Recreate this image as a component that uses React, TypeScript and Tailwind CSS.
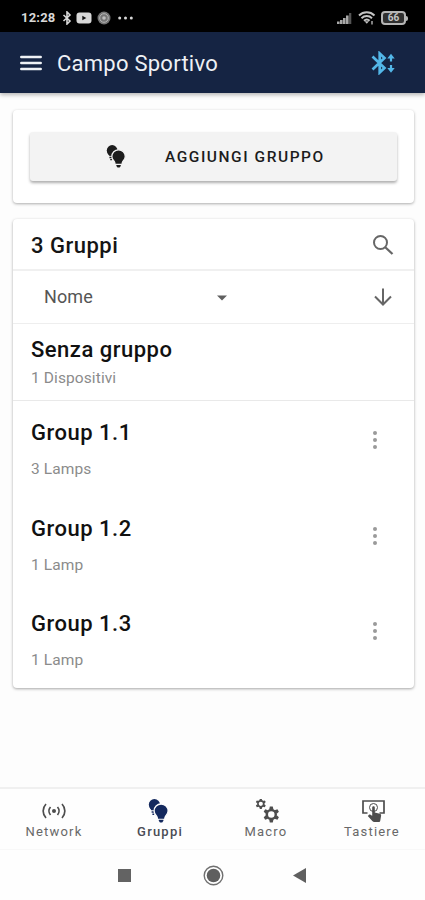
import type { ReactNode } from "react";

function BulbsIcon({ size, halo }: { size: number; halo: string }) {
  return (
    <svg width={size} height={size} viewBox="0 0 24 24" fill="currentColor">
      <circle cx="6.400" cy="5.700" r="5.600" />
      <path d="M1.600 8l1.700 3.200h4V8zM3.600 12.200h2.600v1.600H3.600zM4.400 14.600h1.800v1.400H4.400z" />
      <path
        d="M13.100 5c-4 0-7 3-7 6.900 0 2.400 1.400 3.800 2.500 5.200.6.900.8 1.700.9 3.200h7.200c.1-1.500.3-2.300.9-3.200 1.100-1.400 2.500-2.800 2.500-5.200 0-3.900-3-6.900-7-6.900z"
        stroke={halo}
        strokeWidth="1.300"
      />
      <path d="M10.800 20.800h4.600v1l-1.200 1.800h-2.200l-1.200-1.800z" />
    </svg>
  );
}

function StatusBar() {
  return (
    <div className="flex h-8 shrink-0 items-center bg-black pt-[4px] pr-[17px] pl-[21px] text-[#d8d8d8]">
      <span className="w-[37px] text-[13px] leading-4 font-bold tracking-[0.2px] whitespace-nowrap">12:28</span>
      <svg className="ml-[4px]" width="10" height="14" viewBox="0 0 10 14" fill="none" stroke="currentColor" strokeWidth="1.600">
        <path d="M1.500 4l6.500 6-3 3V1l3 3-6.500 6" />
      </svg>
      <svg className="ml-[4px]" width="16" height="12" viewBox="0 0 16 12">
        <rect x="0.500" y="0.500" width="15" height="11" rx="3" fill="currentColor" />
        <path d="M6.300 3.700l4 2.300-4 2.300z" fill="#111" />
      </svg>
      <svg className="ml-[5px]" width="14" height="14" viewBox="0 0 14 14" fill="none">
        <circle cx="7" cy="7" r="6.500" fill="#757575" />
        <circle cx="7" cy="7" r="4.300" stroke="#b5b5b5" />
        <circle cx="7" cy="7" r="1.800" fill="#bdbdbd" />
      </svg>
      <svg className="ml-[7px]" width="15" height="4" viewBox="0 0 15 4" fill="currentColor">
        <circle cx="1.700" cy="2" r="1.500" />
        <circle cx="7.500" cy="2" r="1.500" />
        <circle cx="13.300" cy="2" r="1.500" />
      </svg>
      <div className="flex-1" />
      <svg width="16" height="12" viewBox="0 0 16 12" fill="#a9a9a9">
        <path d="M0 9.500h2.600V12H0zM3 8h2.600v4H3zM6 6h2.600v6H6zM9 3.500h2.600V12H9z" />
        <path d="M12 1h2.300v11H12z" fill="#555" />
      </svg>
      <svg className="ml-[5px]" width="18" height="14" viewBox="0 0 18 14" fill="none" stroke="#c4c4c4" strokeWidth="2">
        <path d="M1 4.500C5.500.3 12 .3 16.500 4.500M3.500 7.200c3-2.800 7.500-2.800 10.500 0M6 9.800c1.600-1.500 4-1.500 5.600 0" />
        <path d="M6.500 10.200h4.500l-2.200 2.600z" fill="#c4c4c4" stroke="none" />
        <path d="M14 10v3.500" strokeWidth="1.300" />
      </svg>
      <div className="ml-[5px] flex items-center">
        <div className="flex h-[14px] w-[25px] items-center justify-center rounded-[4px] border-2 border-[#b5b5b5] bg-[#303030] text-[10px] leading-none font-bold text-[#c4c4c4]">
          66
        </div>
        <div className="h-[5px] w-[2px] rounded-r bg-[#b5b5b5]" />
      </div>
    </div>
  );
}

function AppBar() {
  return (
    <header className="z-10 flex h-[61px] shrink-0 items-center bg-[#152443] pr-[29px] pl-[20px] shadow-[0_2px_4px_rgba(0,0,0,0.28)]">
      <svg width="22" height="16" viewBox="0 0 22 16" fill="none" stroke="#eef1f5" strokeWidth="2.500" strokeLinecap="round">
        <path d="M1.300 2h19.400M1.300 8h19.400M1.300 14h19.400" />
      </svg>
      <h1 className="mt-[2px] ml-[15px] text-[22px] leading-7 tracking-[0.250px] whitespace-nowrap text-[#eef1f5]">Campo Sportivo</h1>
      <div className="flex-1" />
      <svg width="25" height="24" viewBox="0 0 25 24" fill="none" stroke="#53b7e8" strokeWidth="2.700">
        <path d="M1.500 5.500L13.500 17 8.700 21.500V2.500l4.800 4.500L1.500 18.500" />
        <path d="M20 6v4.500M20 14v4.500" strokeWidth="2.200" />
        <path d="M16.300 7.500L20 2.800l3.700 4.700zM16.300 17L20 21.700l3.700-4.700z" fill="#53b7e8" stroke="none" />
      </svg>
    </header>
  );
}

function GroupRow({ name, detail }: { name: string; detail: string }) {
  return (
    <li className="flex h-[95.500px] justify-between pt-[17px] pr-[35px] pl-[18px]">
      <div>
        <div className="text-[22px] leading-[30px] font-medium tracking-[0.5px] text-[#111]">{name}</div>
        <div className="mt-[11px] text-[15.500px] leading-[20px] tracking-[0.1px] text-[#8b8b8b]">{detail}</div>
      </div>
      <svg className="mt-[12px]" width="8" height="20" viewBox="0 0 8 20" fill="#9a9a9a">
        <circle cx="4" cy="3" r="2" />
        <circle cx="4" cy="10" r="2" />
        <circle cx="4" cy="17" r="2" />
      </svg>
    </li>
  );
}

function Tab({ label, active, children }: { label: string; active?: boolean; children: ReactNode }) {
  return (
    <div className={active ? "flex flex-1 flex-col items-center pt-[9px] text-[#14295e]" : "flex flex-1 flex-col items-center pt-[9px] text-[#4d4d4d]"}>
      <div className="flex h-[26px] items-center justify-center">{children}</div>
      <span className={active ? "text-[13px] leading-[16px] font-medium tracking-[1.200px] text-[#4a4c55]" : "text-[13px] leading-[16px] tracking-[1.200px] text-[#686868]"}>
        {label}
      </span>
    </div>
  );
}

const TEETH = [0, 60, 120, 180, 240, 300];

function Gear({ cx, cy, r }: { cx: number; cy: number; r: number }) {
  return (
    <g transform={`translate(${cx} ${cy}) scale(${r / 10})`}>
      <circle r="5.800" fill="none" stroke="currentColor" strokeWidth="3.200" />
      {TEETH.map((a) => (
        <path key={a} d="M-2.800-6.500L-1.900-10.300h3.800L2.800-6.500z" fill="currentColor" transform={`rotate(${a})`} />
      ))}
    </g>
  );
}

const GROUPS = [
  { name: "Group 1.1", detail: "3 Lamps" },
  { name: "Group 1.2", detail: "1 Lamp" },
  { name: "Group 1.3", detail: "1 Lamp" },
];

export default function App() {
  return (
    <div className="flex h-[900px] w-[425px] flex-col overflow-hidden bg-[#fdfdfd] font-['Roboto',sans-serif]">
      <StatusBar />
      <AppBar />

      <main className="flex-1 pt-[17px] pr-[11px] pl-[13px]">
        <section className="h-[93px] rounded-[4px] bg-white px-[17px] pt-[22px] shadow-[0_1px_3px_rgba(0,0,0,0.32)]">
          <button className="flex h-[49px] w-[367px] items-center rounded-[3px] bg-[#f3f3f3] pl-[76px] text-[#1c1c1c] shadow-[0_2px_3px_rgba(0,0,0,0.32)]">
            <BulbsIcon size={23} halo="#f3f3f3" />
            <span className="ml-[36px] text-[15.500px] leading-6 font-medium tracking-[1.550px] whitespace-nowrap">AGGIUNGI GRUPPO</span>
          </button>
        </section>

        <section className="mt-[16px] h-[469px] rounded-[4px] bg-white shadow-[0_1px_3px_rgba(0,0,0,0.35)]">
          <div className="flex h-[52px] items-center justify-between border-b-2 border-[#f0f0f0] pr-[20px] pl-[18px]">
            <h2 className="mt-[3px] text-[22px] leading-7 font-medium tracking-[0.5px] text-[#151515]">3 Gruppi</h2>
            <svg className="mt-[2px]" width="22" height="22" viewBox="0 0 22 22" fill="none" stroke="#666" strokeWidth="2">
              <circle cx="8.500" cy="8.500" r="6.500" />
              <path d="M13 13l7.500 7" strokeWidth="2.300" />
            </svg>
          </div>
          <div className="flex h-[53px] items-center border-b border-[#eeeeee] pr-[22px] pl-[31px]">
            <span className="w-[173px] text-[18px] leading-6 tracking-[0.1px] text-[#555]">Nome</span>
            <svg className="mt-[2px]" width="10" height="6" viewBox="0 0 10 6" fill="#606060">
              <path d="M0 .5h10L5 5.500z" />
            </svg>
            <div className="flex-1" />
            <svg width="18" height="18" viewBox="0 0 18 18" fill="none" stroke="#666" strokeWidth="2">
              <path d="M9 .5v16M1 8.500l8 8 8-8" />
            </svg>
          </div>
          <div className="h-[77px] border-b border-[#e9e9e9] pt-[11px] pl-[18px]">
            <div className="text-[22px] leading-[30px] font-medium tracking-[0.5px] text-[#111]">Senza gruppo</div>
            <div className="mt-[3px] text-[15.500px] leading-[20px] tracking-[0.1px] text-[#8b8b8b]">1 Dispositivi</div>
          </div>
          <ul>
            {GROUPS.map((g) => (
              <GroupRow key={g.name} name={g.name} detail={g.detail} />
            ))}
          </ul>
        </section>
      </main>

      <nav className="flex h-[63px] shrink-0 border-t-2 border-b border-t-[#f0f0f0] border-b-[#f8f8f8] bg-[#fefefe] pl-px">
        <Tab label="Network">
          <svg width="24" height="18" viewBox="0 0 24 18" fill="none" stroke="currentColor" strokeWidth="1.700">
            <circle cx="12" cy="9" r="2" fill="currentColor" stroke="none" />
            <path d="M8.500 5c-2 2.300-2 5.700 0 8M15.500 5c2 2.300 2 5.700 0 8M4 2C.2 6 .2 12 4 16M20 2c3.800 4 3.800 10 0 14" />
          </svg>
        </Tab>
        <Tab label="Gruppi" active>
          <BulbsIcon size={24} halo="#fefefe" />
        </Tab>
        <Tab label="Macro">
          <svg width="25" height="25" viewBox="0 0 25 25">
            <Gear cx={6.800} cy={4.800} r={5} />
            <Gear cx={17.300} cy={15.500} r={7.700} />
          </svg>
        </Tab>
        <Tab label="Tastiere">
          <svg className="ml-[2px]" width="24" height="24" viewBox="0 0 24 24" fill="none" stroke="currentColor" strokeWidth="1.700">
            <path d="M6.500 14H2V2h21v12h-4.500" />
            <circle cx="12.500" cy="8.500" r="4" strokeWidth="1" />
            <path
              d="M11.200 8.500c0-1.700 2.600-1.700 2.600 0v5l5 1.200c1 .3 1.500.9 1.300 2l-.8 4.800c-.2 1-.7 1.500-1.700 1.500h-4.300c-.8 0-1.400-.3-2-.9l-4.500-5.200 1-1c.7-.5 1.400-.4 2 0l1.400.9z"
              fill="currentColor"
              stroke="none"
            />
          </svg>
        </Tab>
      </nav>

      <div className="flex h-[50px] shrink-0 items-center bg-[#fefefe] pl-[118px]">
        <div className="size-[13px] bg-[#636363]" />
        <svg className="ml-[72px]" width="21" height="21" viewBox="0 0 21 21">
          <circle cx="10.500" cy="10.500" r="9.300" fill="none" stroke="#707070" strokeWidth="1.400" />
          <circle cx="10.500" cy="10.500" r="6.800" fill="#5f5f5f" />
        </svg>
        <svg className="ml-[69px]" width="13" height="15" viewBox="0 0 13 15" fill="#5f5f5f">
          <path d="M13 0v15L0 7.500z" />
        </svg>
      </div>
    </div>
  );
}
